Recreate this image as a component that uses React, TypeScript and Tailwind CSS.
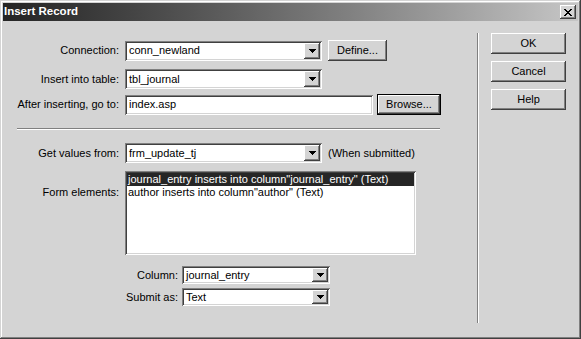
import React from "react";

const sunken =
  "shadow-[inset_1px_1px_#808080,inset_-1px_-1px_#ffffff,inset_2px_2px_#404040,inset_-2px_-2px_#d4d4d4]";
const raised =
  "shadow-[inset_-1px_-1px_#404040,inset_1px_1px_#ffffff,inset_-2px_-2px_#808080,inset_2px_2px_#d4d4d4]";

function Arrow() {
  return (
    <svg width="7" height="4" viewBox="0 0 7 4" shapeRendering="crispEdges">
      <path d="M0 0h7v1h-1v1h-1v1h-1v1h-1v-1h-1v-1h-1v-1h-1z" fill="#000" />
    </svg>
  );
}

function Select({ value, className }: { value: string; className: string }) {
  return (
    <div className={`flex items-stretch bg-white p-[2px] ${sunken} ${className}`}>
      <span className="flex-1 flex items-center pl-[2px] whitespace-nowrap overflow-hidden">{value}</span>
      <div className={`w-[16px] flex items-center justify-center bg-[#d4d4d4] ${raised}`}>
        <Arrow />
      </div>
    </div>
  );
}

function Button({ label, className }: { label: string; className: string }) {
  return (
    <div className={`flex items-center justify-center bg-[#d4d4d4] ${raised} ${className}`}>{label}</div>
  );
}

function Label({ text, className }: { text: string; className: string }) {
  return <div className={`text-right whitespace-nowrap ${className}`}>{text}</div>;
}

export default function App() {
  return (
    <div
      className={`w-[581px] h-[339px] bg-[#d4d4d4] p-[3px] flex flex-col text-[11px] leading-none text-black font-[family-name:'Liberation_Sans',Arial,sans-serif] shadow-[inset_-1px_-1px_#404040,inset_1px_1px_#d4d4d4,inset_-2px_-2px_#808080,inset_2px_2px_#ffffff]`}
    >
      {/* title bar */}
      <div className="h-[18px] flex items-center justify-between bg-gradient-to-r from-[#242424] to-[#c6c6c6] pl-[1px] pr-[2px]">
        <span className="text-white font-bold text-[11.5px]">Insert Record</span>
        <div className={`w-[16px] h-[14px] flex items-center justify-center bg-[#d4d4d4] ${raised}`}>
          <svg width="8" height="7" viewBox="0 0 8 7" shapeRendering="crispEdges">
            <path d="M0 0h2l2 2.5L6 0h2L5 3.5 8 7H6L4 4.5 2 7H0l3-3.5z" fill="#000" />
          </svg>
        </div>
      </div>

      <div className="flex flex-1">
        {/* form */}
        <div className="w-[474px] flex flex-col">
          <div className="mt-[19px] h-[21px] flex items-center">
            <Label text="Connection:" className="w-[116px]" />
            <Select value="conn_newland" className="ml-[6px] w-[197px] h-[20px]" />
            <Button label="Define..." className="ml-[6px] w-[59px] h-[21px]" />
          </div>
          <div className="mt-[8px] h-[20px] flex items-center">
            <Label text="Insert into table:" className="w-[116px]" />
            <Select value="tbl_journal" className="ml-[6px] w-[197px] h-[20px]" />
          </div>
          <div className="mt-[5px] h-[21px] flex items-center">
            <Label text="After inserting, go to:" className="w-[116px]" />
            <div className={`ml-[6px] w-[248px] h-[20px] flex items-center pl-[4px] bg-white ${sunken}`}>index.asp</div>
            <div className="ml-[4px] w-[64px] h-[21px] border border-black">
              <Button label="Browse..." className="w-full h-full" />
            </div>
          </div>

          <div className="mt-[13px] ml-[14px] w-[423px] h-[2px] border-t border-t-[#808080] border-b border-b-white" />

          <div className="mt-[13px] h-[20px] flex items-center">
            <Label text="Get values from:" className="w-[116px]" />
            <Select value="frm_update_tj" className="ml-[6px] w-[197px] h-[20px]" />
            <span className="ml-[6px]">(When submitted)</span>
          </div>

          <div className="mt-[8px] flex items-start">
            <Label text="Form elements:" className="w-[116px] pt-[16px]" />
            <div className={`ml-[6px] w-[291px] h-[84px] bg-white p-[2px] ${sunken}`}>
              <div className="h-[13px] flex items-center pl-[1px] bg-[#262626] text-white whitespace-nowrap">
                journal_entry inserts into column"journal_entry" (Text)
              </div>
              <div className="h-[13px] flex items-center pl-[1px] whitespace-nowrap">
                author inserts into column"author" (Text)
              </div>
            </div>
          </div>

          <div className="mt-[11px] h-[18px] flex items-center">
            <Label text="Column:" className="w-[175px]" />
            <Select value="journal_entry" className="ml-[4px] w-[148px] h-[18px]" />
          </div>
          <div className="mt-[4px] h-[18px] flex items-center">
            <Label text="Submit as:" className="w-[175px]" />
            <Select value="Text" className="ml-[4px] w-[148px] h-[18px]" />
          </div>
        </div>

        {/* vertical divider */}
        <div className="mt-[12px] mb-[13px] w-[2px] border-l border-l-[#808080] border-r border-r-white" />

        {/* actions */}
        <div className="pl-[12px] pt-[12px] flex flex-col gap-[7px]">
          <Button label="OK" className="w-[75px] h-[21px]" />
          <Button label="Cancel" className="w-[75px] h-[21px]" />
          <Button label="Help" className="w-[75px] h-[21px]" />
        </div>
      </div>
    </div>
  );
}
